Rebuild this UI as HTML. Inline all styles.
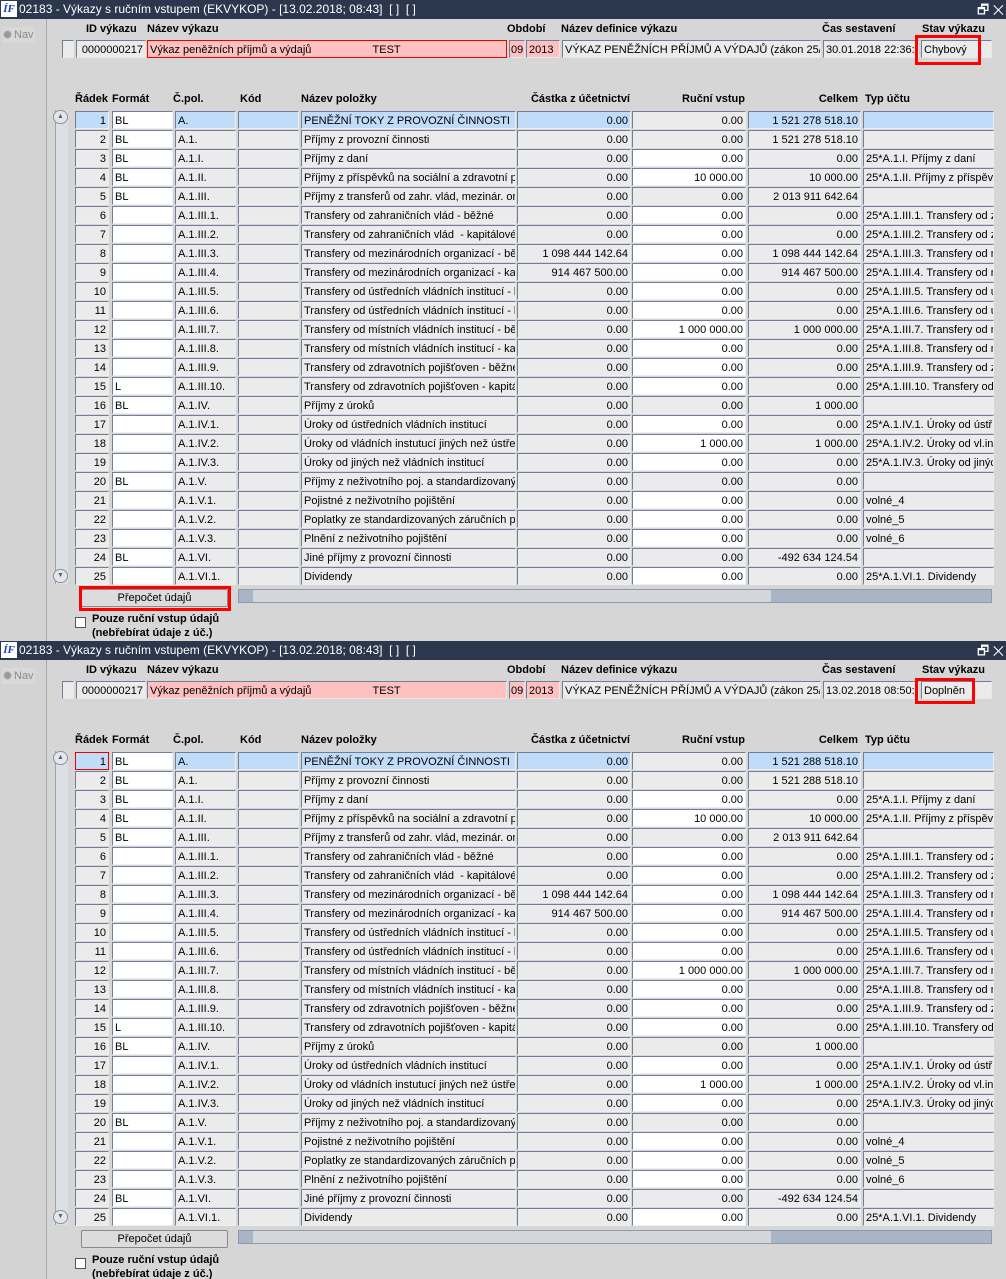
<!DOCTYPE html>
<html><head><meta charset="utf-8">
<style>
*{box-sizing:border-box;margin:0;padding:0}
body{width:1006px;height:1279px;overflow:hidden;background:#d6d6d6;font-family:"Liberation Sans",Arial,sans-serif;font-size:11px;color:#000;position:relative}
.w{position:absolute;left:0;width:1006px;height:641px;overflow:hidden;background:#d6d6d6}
.tb{position:absolute;left:0;top:0;width:1006px;height:19px;background:#2a374d;color:#fff;font-size:12px;line-height:19px;padding-left:19px;white-space:nowrap}
.logo{position:absolute;left:1px;top:1px;width:16px;height:16px;background:#fff;color:#1a3fb0;font-weight:bold;font-style:italic;font-size:11px;line-height:16px;text-align:center;font-family:"Liberation Serif",serif}
.tbr{position:absolute;right:2px;top:0;font-size:13px;color:#fff}
.nav{position:absolute;left:0;top:19px;width:47px;height:640px;border-right:1px solid #a8a8a8;background:#d3d3d3}
.navb{position:absolute;left:2px;top:8px;width:33px;height:16px;background:#d9d9d9;color:#8a8a8a;font-size:11px;line-height:16px}
.navb i{display:inline-block;width:9px;height:9px;border-radius:50%;background:#9a9a9a;border:1px solid #c8c8c8;margin:0 2px 0 1px;vertical-align:-1px}
.lb{position:absolute;font-weight:bold;white-space:nowrap;line-height:13px}
.f{position:absolute;height:18px;line-height:16px;padding:1px 2px 0;border:1px solid;border-color:#6f7f97 #e8e8e8 #e8e8e8 #6f7f97;background:#ebebeb;white-space:nowrap;overflow:hidden}
.pk{background:#ffc0c0}
.r{position:absolute;left:0;height:18px;width:1006px}
.r span{position:absolute;top:0;height:18px;line-height:16px;padding:1px 2px 0;border:1px solid;border-color:#6f7f97 #eeeeee #eeeeee #6f7f97;background:#ebebeb;white-space:nowrap;overflow:hidden}
.r .c1{left:75px;width:34px;text-align:right}
.r .c2{left:112px;width:61px;background:#fff}
.r .c3{left:175px;width:61px}
.r .c4{left:238px;width:61px}
.r .c5{left:301px;width:215px}
.r .c6{left:517px;width:114px;text-align:right}
.r .c7{left:632px;width:114px;text-align:right;background:#fff}
.r .c8{left:748px;width:113px;text-align:right}
.r .c9{left:863px;width:131px}
.r.g .c7{background:#ebebeb}
.r.s span{background:#c0dcf8}
.r.s .c2{background:#fff}
.r.s .c7{background:#ebebeb}
.vs{position:absolute;left:55px;top:110px;width:13px;height:474px;background:#dcdfe3;border-left:1px solid #9aa3ae}
.sb{position:absolute;left:53px;width:15px;height:14px;border:1px solid #8994a3;border-radius:7px;background:#e4e6ea;font-size:7px;text-align:center;line-height:12px;color:#5a6575}
.hs{position:absolute;left:238px;top:589px;width:754px;height:14px;background:#a9b5c4;border:1px solid #8f9aa8}
.hs .th{position:absolute;left:14px;top:0;width:518px;height:12px;background:#d3d7dc}
.btn{position:absolute;left:81px;top:589px;width:147px;height:18px;border:1px solid #8a8a8a;background:#dcdcdc;text-align:center;line-height:16px;border-radius:2px}
.red{position:absolute;border:3px solid #f00}
.chk{position:absolute;left:75px;top:617px;width:11px;height:11px;background:#fff;border:1px solid #555}
</style></head><body>

<div class="w" style="top:0">
<div class="tb"><div class="logo">ÍF</div>02183 - Výkazy s ručním vstupem (EKVYKOP) - [13.02.2018; 08:43]&nbsp; [ ]&nbsp; [ ]<span class="tbr">🗗 ✕</span></div>
<div class="nav"><div class="navb"><i></i>Nav</div></div>
<div class="lb" style="left:86px;top:23px">ID výkazu</div>
<div class="lb" style="left:147px;top:23px">Název výkazu</div>
<div class="lb" style="left:507px;top:23px">Období</div>
<div class="lb" style="left:561px;top:23px">Název definice výkazu</div>
<div class="lb" style="left:822px;top:23px">Čas sestavení</div>
<div class="lb" style="left:922px;top:23px">Stav výkazu</div>
<div class="f" style="left:62px;top:40px;width:12px"></div>
<div class="f" style="left:76px;top:40px;width:70px;text-align:right">0000000217</div>
<div class="f pk" style="left:147px;top:40px;width:360px;border:1px solid #e00">Výkaz peněžních příjmů a výdajů &nbsp; &nbsp; &nbsp; &nbsp; &nbsp; &nbsp; &nbsp; &nbsp; &nbsp; &nbsp;TEST</div>
<div class="f pk" style="left:509px;top:40px;width:16px;padding:1px 1px 0">09</div>
<div class="f pk" style="left:526px;top:40px;width:34px">2013</div>
<div class="f" style="left:562px;top:40px;width:259px">VÝKAZ PENĚŽNÍCH PŘÍJMŮ A VÝDAJŮ (zákon 25/2015)</div>
<div class="f" style="left:823px;top:40px;width:96px">30.01.2018 22:36:11</div>
<div class="f" style="left:921px;top:40px;width:71px">Chybový</div>
<div class="red" style="left:915px;top:35px;width:66px;height:30px"></div>

<div class="lb" style="left:75px;top:93px">Řádek</div>
<div class="lb" style="left:112px;top:93px">Formát</div>
<div class="lb" style="left:173px;top:93px">Č.pol.</div>
<div class="lb" style="left:240px;top:93px">Kód</div>
<div class="lb" style="left:301px;top:93px">Název položky</div>
<div class="lb" style="left:517px;top:93px;width:113px;text-align:right">Částka z účetnictví</div>
<div class="lb" style="left:632px;top:93px;width:113px;text-align:right">Ruční vstup</div>
<div class="lb" style="left:748px;top:93px;width:110px;text-align:right">Celkem</div>
<div class="lb" style="left:865px;top:93px">Typ účtu</div>

<div class="vs"></div>
<div class="sb" style="top:110px">▲</div>
<div class="sb" style="top:569px">▼</div>

<div class="r s" style="top:111px"><span class="c1">1</span><span class="c2">BL</span><span class="c3">A.</span><span class="c4"></span><span class="c5">PENĚŽNÍ TOKY Z PROVOZNÍ ČINNOSTI</span><span class="c6">0.00</span><span class="c7">0.00</span><span class="c8">1 521 278 518.10</span><span class="c9"></span></div>
<div class="r g" style="top:130px"><span class="c1">2</span><span class="c2">BL</span><span class="c3">A.1.</span><span class="c4"></span><span class="c5">Příjmy z provozní činnosti</span><span class="c6">0.00</span><span class="c7">0.00</span><span class="c8">1 521 278 518.10</span><span class="c9"></span></div>
<div class="r" style="top:149px"><span class="c1">3</span><span class="c2">BL</span><span class="c3">A.1.I.</span><span class="c4"></span><span class="c5">Příjmy z daní</span><span class="c6">0.00</span><span class="c7">0.00</span><span class="c8">0.00</span><span class="c9">25*A.1.I. Příjmy z daní</span></div>
<div class="r" style="top:168px"><span class="c1">4</span><span class="c2">BL</span><span class="c3">A.1.II.</span><span class="c4"></span><span class="c5">Příjmy z příspěvků na sociální a zdravotní pojištění</span><span class="c6">0.00</span><span class="c7">10 000.00</span><span class="c8">10 000.00</span><span class="c9">25*A.1.II. Příjmy z příspěvků</span></div>
<div class="r g" style="top:187px"><span class="c1">5</span><span class="c2">BL</span><span class="c3">A.1.III.</span><span class="c4"></span><span class="c5">Příjmy z transferů od zahr. vlád, mezinár. org.</span><span class="c6">0.00</span><span class="c7">0.00</span><span class="c8">2 013 911 642.64</span><span class="c9"></span></div>
<div class="r" style="top:206px"><span class="c1">6</span><span class="c2"></span><span class="c3">A.1.III.1.</span><span class="c4"></span><span class="c5">Transfery od zahraničních vlád - běžné</span><span class="c6">0.00</span><span class="c7">0.00</span><span class="c8">0.00</span><span class="c9">25*A.1.III.1. Transfery od z</span></div>
<div class="r" style="top:225px"><span class="c1">7</span><span class="c2"></span><span class="c3">A.1.III.2.</span><span class="c4"></span><span class="c5">Transfery od zahraničních vlád &nbsp;- kapitálové</span><span class="c6">0.00</span><span class="c7">0.00</span><span class="c8">0.00</span><span class="c9">25*A.1.III.2. Transfery od z</span></div>
<div class="r" style="top:244px"><span class="c1">8</span><span class="c2"></span><span class="c3">A.1.III.3.</span><span class="c4"></span><span class="c5">Transfery od mezinárodních organizací - běžné</span><span class="c6">1 098 444 142.64</span><span class="c7">0.00</span><span class="c8">1 098 444 142.64</span><span class="c9">25*A.1.III.3. Transfery od m</span></div>
<div class="r" style="top:263px"><span class="c1">9</span><span class="c2"></span><span class="c3">A.1.III.4.</span><span class="c4"></span><span class="c5">Transfery od mezinárodních organizací - kapitálové</span><span class="c6">914 467 500.00</span><span class="c7">0.00</span><span class="c8">914 467 500.00</span><span class="c9">25*A.1.III.4. Transfery od m</span></div>
<div class="r" style="top:282px"><span class="c1">10</span><span class="c2"></span><span class="c3">A.1.III.5.</span><span class="c4"></span><span class="c5">Transfery od ústředních vládních institucí - běžné</span><span class="c6">0.00</span><span class="c7">0.00</span><span class="c8">0.00</span><span class="c9">25*A.1.III.5. Transfery od ú</span></div>
<div class="r" style="top:301px"><span class="c1">11</span><span class="c2"></span><span class="c3">A.1.III.6.</span><span class="c4"></span><span class="c5">Transfery od ústředních vládních institucí - kapitálové</span><span class="c6">0.00</span><span class="c7">0.00</span><span class="c8">0.00</span><span class="c9">25*A.1.III.6. Transfery od ú</span></div>
<div class="r" style="top:320px"><span class="c1">12</span><span class="c2"></span><span class="c3">A.1.III.7.</span><span class="c4"></span><span class="c5">Transfery od místních vládních institucí - běžné</span><span class="c6">0.00</span><span class="c7">1 000 000.00</span><span class="c8">1 000 000.00</span><span class="c9">25*A.1.III.7. Transfery od m</span></div>
<div class="r" style="top:339px"><span class="c1">13</span><span class="c2"></span><span class="c3">A.1.III.8.</span><span class="c4"></span><span class="c5">Transfery od místních vládních institucí - kapitálové</span><span class="c6">0.00</span><span class="c7">0.00</span><span class="c8">0.00</span><span class="c9">25*A.1.III.8. Transfery od m</span></div>
<div class="r" style="top:358px"><span class="c1">14</span><span class="c2"></span><span class="c3">A.1.III.9.</span><span class="c4"></span><span class="c5">Transfery od zdravotních pojišťoven - běžné</span><span class="c6">0.00</span><span class="c7">0.00</span><span class="c8">0.00</span><span class="c9">25*A.1.III.9. Transfery od z</span></div>
<div class="r" style="top:377px"><span class="c1">15</span><span class="c2">L</span><span class="c3">A.1.III.10.</span><span class="c4"></span><span class="c5">Transfery od zdravotních pojišťoven - kapitálové</span><span class="c6">0.00</span><span class="c7">0.00</span><span class="c8">0.00</span><span class="c9">25*A.1.III.10. Transfery od</span></div>
<div class="r g" style="top:396px"><span class="c1">16</span><span class="c2">BL</span><span class="c3">A.1.IV.</span><span class="c4"></span><span class="c5">Příjmy z úroků</span><span class="c6">0.00</span><span class="c7">0.00</span><span class="c8">1 000.00</span><span class="c9"></span></div>
<div class="r" style="top:415px"><span class="c1">17</span><span class="c2"></span><span class="c3">A.1.IV.1.</span><span class="c4"></span><span class="c5">Úroky od ústředních vládních institucí</span><span class="c6">0.00</span><span class="c7">0.00</span><span class="c8">0.00</span><span class="c9">25*A.1.IV.1. Úroky od ústř.</span></div>
<div class="r" style="top:434px"><span class="c1">18</span><span class="c2"></span><span class="c3">A.1.IV.2.</span><span class="c4"></span><span class="c5">Úroky od vládních instutucí jiných než ústředních</span><span class="c6">0.00</span><span class="c7">1 000.00</span><span class="c8">1 000.00</span><span class="c9">25*A.1.IV.2. Úroky od vl.inst.</span></div>
<div class="r" style="top:453px"><span class="c1">19</span><span class="c2"></span><span class="c3">A.1.IV.3.</span><span class="c4"></span><span class="c5">Úroky od jiných než vládních institucí</span><span class="c6">0.00</span><span class="c7">0.00</span><span class="c8">0.00</span><span class="c9">25*A.1.IV.3. Úroky od jiných</span></div>
<div class="r g" style="top:472px"><span class="c1">20</span><span class="c2">BL</span><span class="c3">A.1.V.</span><span class="c4"></span><span class="c5">Příjmy z neživotního poj. a standardizovaných</span><span class="c6">0.00</span><span class="c7">0.00</span><span class="c8">0.00</span><span class="c9"></span></div>
<div class="r" style="top:491px"><span class="c1">21</span><span class="c2"></span><span class="c3">A.1.V.1.</span><span class="c4"></span><span class="c5">Pojistné z neživotního pojištění</span><span class="c6">0.00</span><span class="c7">0.00</span><span class="c8">0.00</span><span class="c9">volné_4</span></div>
<div class="r" style="top:510px"><span class="c1">22</span><span class="c2"></span><span class="c3">A.1.V.2.</span><span class="c4"></span><span class="c5">Poplatky ze standardizovaných záručních programů</span><span class="c6">0.00</span><span class="c7">0.00</span><span class="c8">0.00</span><span class="c9">volné_5</span></div>
<div class="r" style="top:529px"><span class="c1">23</span><span class="c2"></span><span class="c3">A.1.V.3.</span><span class="c4"></span><span class="c5">Plnění z neživotního pojištění</span><span class="c6">0.00</span><span class="c7">0.00</span><span class="c8">0.00</span><span class="c9">volné_6</span></div>
<div class="r g" style="top:548px"><span class="c1">24</span><span class="c2">BL</span><span class="c3">A.1.VI.</span><span class="c4"></span><span class="c5">Jiné příjmy z provozní činnosti</span><span class="c6">0.00</span><span class="c7">0.00</span><span class="c8">-492 634 124.54</span><span class="c9"></span></div>
<div class="r" style="top:567px"><span class="c1">25</span><span class="c2"></span><span class="c3">A.1.VI.1.</span><span class="c4"></span><span class="c5">Dividendy</span><span class="c6">0.00</span><span class="c7">0.00</span><span class="c8">0.00</span><span class="c9">25*A.1.VI.1. Dividendy</span></div>

<div class="btn">Přepočet údajů</div>
<div class="red" style="left:79px;top:586px;width:152px;height:25px"></div>
<div class="hs"><div class="th"></div></div>
<div class="chk"></div>
<div class="lb" style="left:92px;top:613px">Pouze ruční vstup údajů</div>
<div class="lb" style="left:92px;top:627px">(nebřebírat údaje z úč.)</div>
</div>

<div class="w" style="top:641px;height:638px">
<div class="tb"><div class="logo">ÍF</div>02183 - Výkazy s ručním vstupem (EKVYKOP) - [13.02.2018; 08:43]&nbsp; [ ]&nbsp; [ ]<span class="tbr">🗗 ✕</span></div>
<div class="nav"><div class="navb"><i></i>Nav</div></div>
<div class="lb" style="left:86px;top:23px">ID výkazu</div>
<div class="lb" style="left:147px;top:23px">Název výkazu</div>
<div class="lb" style="left:507px;top:23px">Období</div>
<div class="lb" style="left:561px;top:23px">Název definice výkazu</div>
<div class="lb" style="left:822px;top:23px">Čas sestavení</div>
<div class="lb" style="left:922px;top:23px">Stav výkazu</div>
<div class="f" style="left:62px;top:40px;width:12px"></div>
<div class="f" style="left:76px;top:40px;width:70px;text-align:right">0000000217</div>
<div class="f pk" style="left:147px;top:40px;width:360px">Výkaz peněžních příjmů a výdajů &nbsp; &nbsp; &nbsp; &nbsp; &nbsp; &nbsp; &nbsp; &nbsp; &nbsp; &nbsp;TEST</div>
<div class="f pk" style="left:509px;top:40px;width:16px;padding:1px 1px 0">09</div>
<div class="f pk" style="left:526px;top:40px;width:34px">2013</div>
<div class="f" style="left:562px;top:40px;width:259px">VÝKAZ PENĚŽNÍCH PŘÍJMŮ A VÝDAJŮ (zákon 25/2015)</div>
<div class="f" style="left:823px;top:40px;width:96px">13.02.2018 08:50:53</div>
<div class="f" style="left:921px;top:40px;width:71px">Doplněn</div>
<div class="red" style="left:915px;top:37px;width:60px;height:26px"></div>

<div class="lb" style="left:75px;top:93px">Řádek</div>
<div class="lb" style="left:112px;top:93px">Formát</div>
<div class="lb" style="left:173px;top:93px">Č.pol.</div>
<div class="lb" style="left:240px;top:93px">Kód</div>
<div class="lb" style="left:301px;top:93px">Název položky</div>
<div class="lb" style="left:517px;top:93px;width:113px;text-align:right">Částka z účetnictví</div>
<div class="lb" style="left:632px;top:93px;width:113px;text-align:right">Ruční vstup</div>
<div class="lb" style="left:748px;top:93px;width:110px;text-align:right">Celkem</div>
<div class="lb" style="left:865px;top:93px">Typ účtu</div>

<div class="vs"></div>
<div class="sb" style="top:110px">▲</div>
<div class="sb" style="top:569px">▼</div>

<div class="r s" style="top:111px"><span class="c1" style="border:1px solid #e00">1</span><span class="c2">BL</span><span class="c3">A.</span><span class="c4"></span><span class="c5">PENĚŽNÍ TOKY Z PROVOZNÍ ČINNOSTI</span><span class="c6">0.00</span><span class="c7">0.00</span><span class="c8">1 521 288 518.10</span><span class="c9"></span></div>
<div class="r g" style="top:130px"><span class="c1">2</span><span class="c2">BL</span><span class="c3">A.1.</span><span class="c4"></span><span class="c5">Příjmy z provozní činnosti</span><span class="c6">0.00</span><span class="c7">0.00</span><span class="c8">1 521 288 518.10</span><span class="c9"></span></div>
<div class="r" style="top:149px"><span class="c1">3</span><span class="c2">BL</span><span class="c3">A.1.I.</span><span class="c4"></span><span class="c5">Příjmy z daní</span><span class="c6">0.00</span><span class="c7">0.00</span><span class="c8">0.00</span><span class="c9">25*A.1.I. Příjmy z daní</span></div>
<div class="r" style="top:168px"><span class="c1">4</span><span class="c2">BL</span><span class="c3">A.1.II.</span><span class="c4"></span><span class="c5">Příjmy z příspěvků na sociální a zdravotní pojištění</span><span class="c6">0.00</span><span class="c7">10 000.00</span><span class="c8">10 000.00</span><span class="c9">25*A.1.II. Příjmy z příspěvků</span></div>
<div class="r g" style="top:187px"><span class="c1">5</span><span class="c2">BL</span><span class="c3">A.1.III.</span><span class="c4"></span><span class="c5">Příjmy z transferů od zahr. vlád, mezinár. org.</span><span class="c6">0.00</span><span class="c7">0.00</span><span class="c8">2 013 911 642.64</span><span class="c9"></span></div>
<div class="r" style="top:206px"><span class="c1">6</span><span class="c2"></span><span class="c3">A.1.III.1.</span><span class="c4"></span><span class="c5">Transfery od zahraničních vlád - běžné</span><span class="c6">0.00</span><span class="c7">0.00</span><span class="c8">0.00</span><span class="c9">25*A.1.III.1. Transfery od z</span></div>
<div class="r" style="top:225px"><span class="c1">7</span><span class="c2"></span><span class="c3">A.1.III.2.</span><span class="c4"></span><span class="c5">Transfery od zahraničních vlád &nbsp;- kapitálové</span><span class="c6">0.00</span><span class="c7">0.00</span><span class="c8">0.00</span><span class="c9">25*A.1.III.2. Transfery od z</span></div>
<div class="r" style="top:244px"><span class="c1">8</span><span class="c2"></span><span class="c3">A.1.III.3.</span><span class="c4"></span><span class="c5">Transfery od mezinárodních organizací - běžné</span><span class="c6">1 098 444 142.64</span><span class="c7">0.00</span><span class="c8">1 098 444 142.64</span><span class="c9">25*A.1.III.3. Transfery od m</span></div>
<div class="r" style="top:263px"><span class="c1">9</span><span class="c2"></span><span class="c3">A.1.III.4.</span><span class="c4"></span><span class="c5">Transfery od mezinárodních organizací - kapitálové</span><span class="c6">914 467 500.00</span><span class="c7">0.00</span><span class="c8">914 467 500.00</span><span class="c9">25*A.1.III.4. Transfery od m</span></div>
<div class="r" style="top:282px"><span class="c1">10</span><span class="c2"></span><span class="c3">A.1.III.5.</span><span class="c4"></span><span class="c5">Transfery od ústředních vládních institucí - běžné</span><span class="c6">0.00</span><span class="c7">0.00</span><span class="c8">0.00</span><span class="c9">25*A.1.III.5. Transfery od ú</span></div>
<div class="r" style="top:301px"><span class="c1">11</span><span class="c2"></span><span class="c3">A.1.III.6.</span><span class="c4"></span><span class="c5">Transfery od ústředních vládních institucí - kapitálové</span><span class="c6">0.00</span><span class="c7">0.00</span><span class="c8">0.00</span><span class="c9">25*A.1.III.6. Transfery od ú</span></div>
<div class="r" style="top:320px"><span class="c1">12</span><span class="c2"></span><span class="c3">A.1.III.7.</span><span class="c4"></span><span class="c5">Transfery od místních vládních institucí - běžné</span><span class="c6">0.00</span><span class="c7">1 000 000.00</span><span class="c8">1 000 000.00</span><span class="c9">25*A.1.III.7. Transfery od m</span></div>
<div class="r" style="top:339px"><span class="c1">13</span><span class="c2"></span><span class="c3">A.1.III.8.</span><span class="c4"></span><span class="c5">Transfery od místních vládních institucí - kapitálové</span><span class="c6">0.00</span><span class="c7">0.00</span><span class="c8">0.00</span><span class="c9">25*A.1.III.8. Transfery od m</span></div>
<div class="r" style="top:358px"><span class="c1">14</span><span class="c2"></span><span class="c3">A.1.III.9.</span><span class="c4"></span><span class="c5">Transfery od zdravotních pojišťoven - běžné</span><span class="c6">0.00</span><span class="c7">0.00</span><span class="c8">0.00</span><span class="c9">25*A.1.III.9. Transfery od z</span></div>
<div class="r" style="top:377px"><span class="c1">15</span><span class="c2">L</span><span class="c3">A.1.III.10.</span><span class="c4"></span><span class="c5">Transfery od zdravotních pojišťoven - kapitálové</span><span class="c6">0.00</span><span class="c7">0.00</span><span class="c8">0.00</span><span class="c9">25*A.1.III.10. Transfery od</span></div>
<div class="r g" style="top:396px"><span class="c1">16</span><span class="c2">BL</span><span class="c3">A.1.IV.</span><span class="c4"></span><span class="c5">Příjmy z úroků</span><span class="c6">0.00</span><span class="c7">0.00</span><span class="c8">1 000.00</span><span class="c9"></span></div>
<div class="r" style="top:415px"><span class="c1">17</span><span class="c2"></span><span class="c3">A.1.IV.1.</span><span class="c4"></span><span class="c5">Úroky od ústředních vládních institucí</span><span class="c6">0.00</span><span class="c7">0.00</span><span class="c8">0.00</span><span class="c9">25*A.1.IV.1. Úroky od ústř.</span></div>
<div class="r" style="top:434px"><span class="c1">18</span><span class="c2"></span><span class="c3">A.1.IV.2.</span><span class="c4"></span><span class="c5">Úroky od vládních instutucí jiných než ústředních</span><span class="c6">0.00</span><span class="c7">1 000.00</span><span class="c8">1 000.00</span><span class="c9">25*A.1.IV.2. Úroky od vl.inst.</span></div>
<div class="r" style="top:453px"><span class="c1">19</span><span class="c2"></span><span class="c3">A.1.IV.3.</span><span class="c4"></span><span class="c5">Úroky od jiných než vládních institucí</span><span class="c6">0.00</span><span class="c7">0.00</span><span class="c8">0.00</span><span class="c9">25*A.1.IV.3. Úroky od jiných</span></div>
<div class="r g" style="top:472px"><span class="c1">20</span><span class="c2">BL</span><span class="c3">A.1.V.</span><span class="c4"></span><span class="c5">Příjmy z neživotního poj. a standardizovaných</span><span class="c6">0.00</span><span class="c7">0.00</span><span class="c8">0.00</span><span class="c9"></span></div>
<div class="r" style="top:491px"><span class="c1">21</span><span class="c2"></span><span class="c3">A.1.V.1.</span><span class="c4"></span><span class="c5">Pojistné z neživotního pojištění</span><span class="c6">0.00</span><span class="c7">0.00</span><span class="c8">0.00</span><span class="c9">volné_4</span></div>
<div class="r" style="top:510px"><span class="c1">22</span><span class="c2"></span><span class="c3">A.1.V.2.</span><span class="c4"></span><span class="c5">Poplatky ze standardizovaných záručních programů</span><span class="c6">0.00</span><span class="c7">0.00</span><span class="c8">0.00</span><span class="c9">volné_5</span></div>
<div class="r" style="top:529px"><span class="c1">23</span><span class="c2"></span><span class="c3">A.1.V.3.</span><span class="c4"></span><span class="c5">Plnění z neživotního pojištění</span><span class="c6">0.00</span><span class="c7">0.00</span><span class="c8">0.00</span><span class="c9">volné_6</span></div>
<div class="r g" style="top:548px"><span class="c1">24</span><span class="c2">BL</span><span class="c3">A.1.VI.</span><span class="c4"></span><span class="c5">Jiné příjmy z provozní činnosti</span><span class="c6">0.00</span><span class="c7">0.00</span><span class="c8">-492 634 124.54</span><span class="c9"></span></div>
<div class="r" style="top:567px"><span class="c1">25</span><span class="c2"></span><span class="c3">A.1.VI.1.</span><span class="c4"></span><span class="c5">Dividendy</span><span class="c6">0.00</span><span class="c7">0.00</span><span class="c8">0.00</span><span class="c9">25*A.1.VI.1. Dividendy</span></div>

<div class="btn">Přepočet údajů</div>
<div class="hs"><div class="th"></div></div>
<div class="chk"></div>
<div class="lb" style="left:92px;top:613px">Pouze ruční vstup údajů</div>
<div class="lb" style="left:92px;top:627px">(nebřebírat údaje z úč.)</div>
</div>

</body></html>
